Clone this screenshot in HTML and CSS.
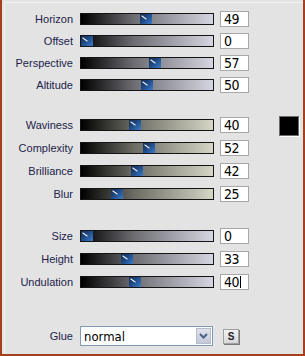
FILE: index.html
```html
<!DOCTYPE html>
<html>
<head>
    <meta charset="UTF-8">
    <title>Wave settings</title>
    <link rel="stylesheet" href="styles.css">
</head>
<body>
    <div class="panel">
        <div class="group cool first">
            <div class="row"><span class="label">Horizon</span><div class="track"><span class="thumb" style="--v: 0.49"></span></div><span class="value">49</span></div>
            <div class="row"><span class="label">Offset</span><div class="track"><span class="thumb" style="--v: 0"></span></div><span class="value">0</span></div>
            <div class="row"><span class="label">Perspective</span><div class="track"><span class="thumb" style="--v: 0.57"></span></div><span class="value">57</span></div>
            <div class="row"><span class="label">Altitude</span><div class="track"><span class="thumb" style="--v: 0.5"></span></div><span class="value">50</span></div>
        </div>

        <div class="group warm second">
            <div class="row"><span class="label">Waviness</span><div class="track"><span class="thumb" style="--v: 0.4"></span></div><span class="value">40</span><span class="swatch"></span></div>
            <div class="row"><span class="label">Complexity</span><div class="track"><span class="thumb" style="--v: 0.52"></span></div><span class="value">52</span></div>
            <div class="row"><span class="label">Brilliance</span><div class="track"><span class="thumb" style="--v: 0.42"></span></div><span class="value">42</span></div>
            <div class="row"><span class="label">Blur</span><div class="track"><span class="thumb" style="--v: 0.25"></span></div><span class="value">25</span></div>
        </div>

        <div class="group cool third">
            <div class="row"><span class="label">Size</span><div class="track"><span class="thumb" style="--v: 0"></span></div><span class="value">0</span></div>
            <div class="row"><span class="label">Height</span><div class="track"><span class="thumb" style="--v: 0.33"></span></div><span class="value">33</span></div>
            <div class="row"><span class="label">Undulation</span><div class="track"><span class="thumb" style="--v: 0.4"></span></div><span class="value">40<span class="caret"></span></span></div>
        </div>

        <div class="glue">
            <span class="label">Glue</span>
            <div class="select">
                <span class="select-text">normal</span>
                <span class="select-btn">
                    <svg width="9" height="6" viewBox="0 0 9 6"><path d="M1 1 L4.5 4.5 L8 1" fill="none" stroke="#4d6185" stroke-width="2"/></svg>
                </span>
            </div>
            <span class="small-btn">S</span>
        </div>
    </div>
</body>
</html>
```

FILE: styles.css
```css
body {
    margin: 0;
    font-family: "Liberation Sans", Arial, sans-serif;
}
.panel {
    width: 305px;
    height: 356px;
    box-sizing: border-box;
    background-color: #e3e3e3;
    border-left: 2px solid #a5401f;
    border-right: 2px solid #a5401f;
    border-bottom: 2px solid #a5401f;
    box-shadow: inset 2px 2px 0 #e3e3e3, inset 3px 3px 0 #f2f2f2;
    overflow: hidden;
}
.group {
    display: flex;
    flex-direction: column;
}
.first {
    padding-top: 8px;
}
.first .row {
    height: 22px;
}
.second {
    margin-top: 17px;
}
.third {
    margin-top: 19px;
}
.row {
    display: flex;
    align-items: center;
    height: 23px;
}
.label {
    width: 71px;
    text-align: right;
    font-size: 11px;
    color: #22224a;
}
.track {
    position: relative;
    width: 132px;
    height: 10px;
    margin-left: 7px;
    border: 1px solid #151515;
}
.cool .track {
    background: linear-gradient(to right, #000 0%, #6c6c72 40%, #d6d6e2 100%);
}
.warm .track {
    background: linear-gradient(to right, #000 0%, #6c6c64 40%, #d6d6c6 100%);
}
.thumb {
    position: absolute;
    top: 0;
    left: calc((100% - 12px) * var(--v));
    width: 12px;
    height: 10px;
    background: linear-gradient(135deg, #14294d 0%, #1f4a86 45%, #3b7ccc 100%);
}
.thumb::before {
    content: "";
    position: absolute;
    left: 1px;
    top: 3px;
    width: 6px;
    height: 1px;
    background: #f4f4f4;
    transform: rotate(35deg);
}
.value {
    position: relative;
    width: 24px;
    height: 14px;
    margin-left: 6px;
    padding-left: 3px;
    border: 1px solid #a8a8a8;
    background: #fff;
    font-family: "Liberation Sans Narrow", "DejaVu Sans Condensed", "Liberation Sans", sans-serif;
    font-stretch: condensed;
    font-size: 14px;
    line-height: 14px;
    color: #000;
    letter-spacing: -0.5px;
}
.caret {
    display: inline-block;
    width: 1px;
    height: 12px;
    margin-left: 1px;
    vertical-align: -1px;
    background: #000;
}
.swatch {
    width: 18px;
    height: 18px;
    margin-left: 30px;
    margin-top: 3px;
    background: #000;
    border: 1px solid #6a6a6a;
    box-shadow: 1px 1px 0 #fdfdfd;
}
.glue {
    display: flex;
    align-items: center;
    margin-top: 33px;
}
.select {
    display: flex;
    align-items: center;
    width: 131px;
    height: 18px;
    margin-left: 7px;
    border: 1px solid #7f9db9;
    background: #fff;
}
.select-text {
    flex: 1;
    padding-left: 3px;
    font-family: "Liberation Sans Narrow", "DejaVu Sans Condensed", "Liberation Sans", sans-serif;
    font-stretch: condensed;
    font-size: 13px;
    color: #000;
}
.select-btn {
    display: flex;
    align-items: center;
    justify-content: center;
    width: 15px;
    height: 16px;
    margin-right: 1px;
    background: linear-gradient(#dfe2ea, #c4c9d8);
    border: 1px solid #b6bccb;
    box-sizing: border-box;
}
.small-btn {
    display: flex;
    align-items: center;
    justify-content: center;
    width: 14px;
    height: 13px;
    margin-left: 10px;
    border: 1px solid #a0a0a0;
    background: linear-gradient(#f2f2f2, #d8d8d8);
    box-shadow: 1px 1px 0 #7a7a7a;
    font-size: 10px;
    font-weight: bold;
    color: #222;
}
```
